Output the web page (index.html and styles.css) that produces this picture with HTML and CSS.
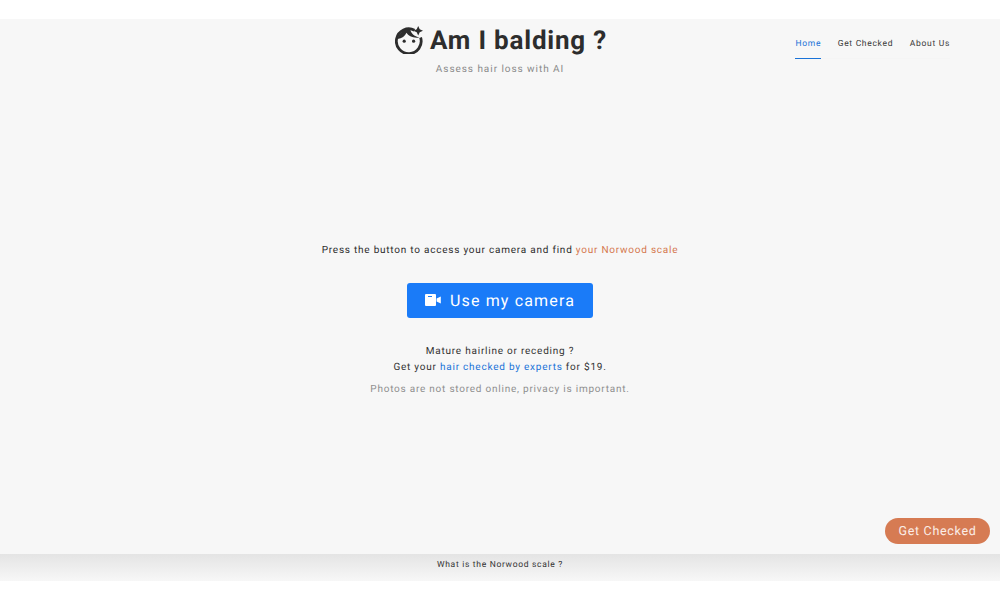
FILE: index.html
```html
<!DOCTYPE html>
<html lang="en">
<head>
<meta charset="utf-8">
<title>Am I balding ?</title>
<link rel="stylesheet" href="styles.css">
</head>
<body>
<div class="page">
  <header class="header">
    <div class="brand">
      <h1 class="title">
        <svg class="logo" viewBox="0 0 28 28" aria-hidden="true">
          <path d="M19.5 4.2A12.4 12.4 0 1 0 25.6 11.5" fill="none" stroke="#2d2d2d" stroke-width="2.8"/>
          <path d="M2.5 13C4 7 9 3 15 3C16 7 19 10.5 24.5 11.5C18 12.5 13.5 10 11.5 6.8C10 10 7 12.6 2.5 13Z" fill="#2d2d2d"/>
          <circle cx="9.2" cy="15.2" r="1.6" fill="#2d2d2d"/>
          <circle cx="18.6" cy="15.2" r="1.6" fill="#2d2d2d"/>
          <path d="M23.2 0L24.7 3.3L28 4.8L24.7 6.3L23.2 9.6L21.7 6.3L18.4 4.8L21.7 3.3Z" fill="#2d2d2d"/>
        </svg>
        <span class="title-text">Am I balding ?</span>
      </h1>
      <p class="tagline">Assess hair loss with AI</p>
    </div>
    <nav class="nav">
      <a class="nav-link active" href="#">Home</a>
      <a class="nav-link" href="#">Get Checked</a>
      <a class="nav-link" href="#">About Us</a>
    </nav>
  </header>
  <main class="main">
    <p class="lead">Press the button to access your camera and find <a class="orange" href="#">your Norwood scale</a></p>
    <button class="camera-btn" type="button">
      <svg class="cam-icon" viewBox="0 0 16 12" aria-hidden="true">
        <rect x="0" y="0" width="11" height="12" rx="1" fill="#fff"/>
        <path d="M11.6 4.5L15.8 2.4V9.6L11.6 7.5Z" fill="#fff"/>
        <rect x="3" y="2" width="4" height="1" fill="#1a7bf8"/>
      </svg>
      <span>Use my camera</span>
    </button>
    <p class="info">Mature hairline or receding ?<br>Get your <a class="blue" href="#">hair checked by experts</a> for $19.</p>
    <p class="note">Photos are not stored online, privacy is important.</p>
    <a class="fab" href="#">Get Checked</a>
  </main>
  <footer class="band">What is the Norwood scale ?</footer>
</div>
</body>
</html>
```
FILE: styles.css
```css
* { box-sizing: border-box; }
html, body { margin: 0; background: #fff; }
body {
  font-family: Roboto, "Liberation Sans", sans-serif;
  color: #2d2d2d;
  text-rendering: geometricPrecision;
}
.page { padding-top: 19px; height: 600px; display: flex; flex-direction: column; }
.header {
  background: #f7f7f7;
  display: grid;
  grid-template-columns: 1fr auto 1fr;
  height: 62px;
}
.brand { grid-column: 2; display: flex; flex-direction: column; align-items: center; }
.title {
  margin: 0;
  padding-left: 2px;
  display: flex;
  align-items: center;
  gap: 7px;
  height: 42px;
  font-size: 26px;
  line-height: 42px;
  font-weight: 700;
  letter-spacing: .8px;
  color: #2d2d2d;
}
.title-text { padding-top: 2px; }
.logo { width: 28px; height: 28px; flex: none; }
.tagline { margin: 1px 0 0; font-size: 10px; line-height: 16px; letter-spacing: .95px; color: #8a8a8a; }
.nav {
  grid-column: 3;
  justify-self: end;
  display: flex;
  align-items: flex-start;
  gap: 16.5px;
  margin-right: 50px;
  padding-top: 17px;
  height: 40px;
  border-bottom: 1px solid #f5f5f5;
}
.nav-link {
  display: block;
  height: 23px;
  font-size: 8.5px;
  line-height: 17px;
  letter-spacing: .7px;
  color: #3a3a3a;
  text-decoration: none;
}
.nav-link.active { color: #1a73d8; border-bottom: 1px solid #1a73d8; }
.main {
  position: relative;
  background: #f7f7f7;
  height: 473px;
  display: flex;
  flex-direction: column;
  align-items: center;
  padding-top: 162px;
}
.lead { margin: 0; font-size: 10px; line-height: 16px; letter-spacing: .77px; color: #2d2d2d; }
.orange { color: #d5774f; text-decoration: none; }
.blue { color: #1a73d8; text-decoration: none; }
.camera-btn {
  margin-top: 24px;
  width: 186px;
  height: 35px;
  border: 0;
  border-radius: 3px;
  background: #1a7bf8;
  color: #fff;
  font-family: inherit;
  font-size: 16px;
  letter-spacing: 1.15px;
  text-rendering: geometricPrecision;
  display: flex;
  align-items: center;
  justify-content: center;
  gap: 9px;
  padding: 0 0 1px;
}
.cam-icon { width: 16px; height: 12px; flex: none; }
.info { margin: 26px 0 0; text-align: center; font-size: 10px; line-height: 16px; letter-spacing: .77px; color: #333; }
.note { margin: 6px 0 0; font-size: 10px; line-height: 16px; letter-spacing: .77px; color: #8f8f8f; }
.fab {
  position: absolute;
  right: 10px;
  bottom: 10px;
  width: 105px;
  height: 26px;
  padding-top: 1px;
  border-radius: 13px;
  background: #d67b53;
  color: #fbeee8;
  font-size: 12.5px;
  line-height: 26px;
  letter-spacing: .7px;
  text-align: center;
  text-decoration: none;
}
.band {
  height: 27px;
  background: linear-gradient(#e4e4e4, #f7f7f7);
  text-align: center;
  font-size: 8.5px;
  line-height: 23px;
  letter-spacing: .69px;
  color: #333;
}
```
